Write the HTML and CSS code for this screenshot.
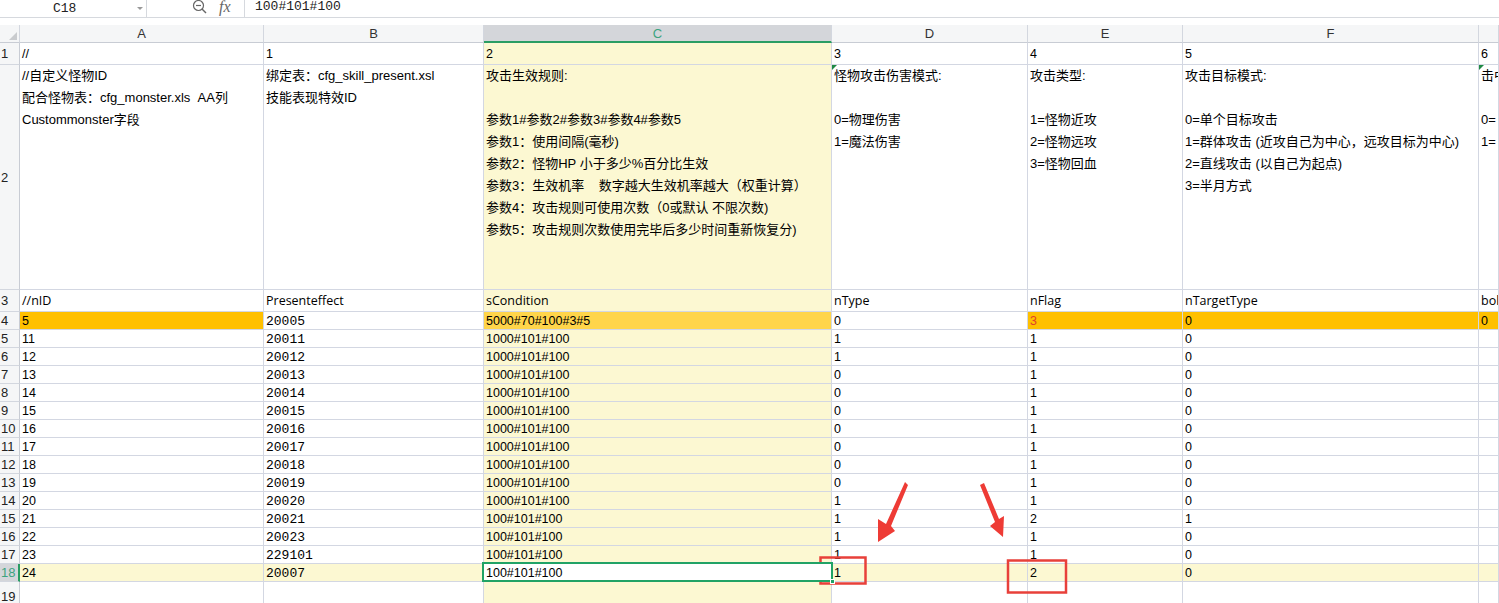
FILE: index.html
```html
<!DOCTYPE html>
<html lang="zh">
<head>
<meta charset="utf-8">
<title>cfg sheet</title>
<link rel="stylesheet" href="styles.css">
</head>
<body>
<div class="formula-bar">
  <div class="name-box"><span class="ref">C18</span><span class="caret"></span></div>
  <div class="tools">
    <svg class="zoom-ico" width="16" height="16" viewBox="0 0 16 16"><circle cx="6.5" cy="6.5" r="5" fill="none" stroke="#666" stroke-width="1.2"/><line x1="4" y1="6.5" x2="9" y2="6.5" stroke="#666" stroke-width="1.2"/><line x1="10" y1="10" x2="14" y2="14" stroke="#666" stroke-width="1.4"/></svg>
    <span class="fx">fx</span>
  </div>
  <div class="formula-input">100#101#100</div>
</div>
<div class="spacer"></div>
<div class="sheet">
  <!-- header -->
  <div class="ch corner"><span class="corner-tri"></span></div>
  <div class="ch">A</div><div class="ch">B</div><div class="ch active">C</div><div class="ch">D</div><div class="ch">E</div><div class="ch">F</div><div class="ch"></div>

  <!-- row 1 -->
  <div class="rh">1</div>
  <div class="c">//</div><div class="c">1</div><div class="c y">2</div><div class="c">3</div><div class="c">4</div><div class="c">5</div><div class="c">6</div>

  <!-- row 2 -->
  <div class="rh">2</div>
  <div class="c multi">//自定义怪物ID<br>配合怪物表：cfg_monster.xls&nbsp;&nbsp;AA列<br>Custommonster字段</div>
  <div class="c multi">绑定表：cfg_skill_present.xsl<br>技能表现特效ID</div>
  <div class="c multi y">攻击生效规则:<br><br>参数1#参数2#参数3#参数4#参数5<br>参数1：使用间隔(毫秒)<br>参数2：怪物HP 小于多少%百分比生效<br>参数3：生效机率&nbsp;&nbsp;&nbsp;&nbsp;数字越大生效机率越大（权重计算）<br>参数4：攻击规则可使用次数（0或默认 不限次数)<br>参数5：攻击规则次数使用完毕后多少时间重新恢复分)</div>
  <div class="c multi tri">怪物攻击伤害模式:<br><br>0=物理伤害<br>1=魔法伤害</div>
  <div class="c multi">攻击类型:<br><br>1=怪物近攻<br>2=怪物远攻<br>3=怪物回血</div>
  <div class="c multi">攻击目标模式:<br><br>0=单个目标攻击<br>1=群体攻击 (近攻自己为中心，远攻目标为中心)<br>2=直线攻击 (以自己为起点)<br>3=半月方式</div>
  <div class="c multi tri">击中目标效果:<br><br>0=&nbsp;不击退<br>1=&nbsp;击退</div>

  <!-- row 3 -->
  <div class="rh">3</div>
  <div class="c hd">//nID</div><div class="c hd">Presenteffect</div><div class="c hd y">sCondition</div><div class="c hd">nType</div><div class="c hd">nFlag</div><div class="c hd">nTargetType</div><div class="c hd">bolHit</div>

  <!-- row 4 -->
  <div class="rh">4</div>
  <div class="c or">5</div><div class="c num">20005</div><div class="c or-y">5000#70#100#3#5</div><div class="c">0</div><div class="c or red">3</div><div class="c or">0</div><div class="c or">0</div>

  <div class="rh">5</div>
  <div class="c">11</div><div class="c num">20011</div><div class="c y">1000#101#100</div><div class="c">1</div><div class="c">1</div><div class="c">0</div><div class="c"></div>
  <div class="rh">6</div>
  <div class="c">12</div><div class="c num">20012</div><div class="c y">1000#101#100</div><div class="c">1</div><div class="c">1</div><div class="c">0</div><div class="c"></div>
  <div class="rh">7</div>
  <div class="c">13</div><div class="c num">20013</div><div class="c y">1000#101#100</div><div class="c">0</div><div class="c">1</div><div class="c">0</div><div class="c"></div>
  <div class="rh">8</div>
  <div class="c">14</div><div class="c num">20014</div><div class="c y">1000#101#100</div><div class="c">0</div><div class="c">1</div><div class="c">0</div><div class="c"></div>
  <div class="rh">9</div>
  <div class="c">15</div><div class="c num">20015</div><div class="c y">1000#101#100</div><div class="c">0</div><div class="c">1</div><div class="c">0</div><div class="c"></div>
  <div class="rh">10</div>
  <div class="c">16</div><div class="c num">20016</div><div class="c y">1000#101#100</div><div class="c">0</div><div class="c">1</div><div class="c">0</div><div class="c"></div>
  <div class="rh">11</div>
  <div class="c">17</div><div class="c num">20017</div><div class="c y">1000#101#100</div><div class="c">0</div><div class="c">1</div><div class="c">0</div><div class="c"></div>
  <div class="rh">12</div>
  <div class="c">18</div><div class="c num">20018</div><div class="c y">1000#101#100</div><div class="c">0</div><div class="c">1</div><div class="c">0</div><div class="c"></div>
  <div class="rh">13</div>
  <div class="c">19</div><div class="c num">20019</div><div class="c y">1000#101#100</div><div class="c">0</div><div class="c">1</div><div class="c">0</div><div class="c"></div>
  <div class="rh">14</div>
  <div class="c">20</div><div class="c num">20020</div><div class="c y">1000#101#100</div><div class="c">1</div><div class="c">1</div><div class="c">0</div><div class="c"></div>
  <div class="rh">15</div>
  <div class="c">21</div><div class="c num">20021</div><div class="c y">100#101#100</div><div class="c">1</div><div class="c">2</div><div class="c">1</div><div class="c"></div>
  <div class="rh">16</div>
  <div class="c">22</div><div class="c num">20023</div><div class="c y">100#101#100</div><div class="c">1</div><div class="c">1</div><div class="c">0</div><div class="c"></div>
  <div class="rh">17</div>
  <div class="c">23</div><div class="c num">229101</div><div class="c y">100#101#100</div><div class="c">1</div><div class="c">1</div><div class="c">0</div><div class="c"></div>
  <div class="rh active-r">18</div>
  <div class="c hl">24</div><div class="c num hl">20007</div><div class="c sel">100#101#100<span class="sel-box"><span class="handle"></span></span></div><div class="c hl">1</div><div class="c hl">2</div><div class="c hl">0</div><div class="c hl"></div>
  <div class="rh">19</div>
  <div class="c"></div><div class="c"></div><div class="c y"></div><div class="c"></div><div class="c"></div><div class="c"></div><div class="c"></div>
</div>

<svg class="annot" width="1499" height="603" viewBox="0 0 1499 603">
  <rect x="820.5" y="557.5" width="45" height="26" fill="none" stroke="#e8403a" stroke-width="2.5"/>
  <rect x="1008" y="560.5" width="58" height="32" fill="none" stroke="#e8403a" stroke-width="2.5"/>
  <polygon points="905,482 908,485 891,526 895,531 878,542 878,519 886,524" fill="#ee3b35"/>
  <polygon points="980,485 984,483 999,519 1004,516 1003,537 990,526 995,522" fill="#ee3b35"/>
</svg>
</body>
</html>
```

FILE: styles.css
```css
* { box-sizing: border-box; }

html, body {
  margin: 0;
  padding: 0;
}

body {
  width: 1499px;
  height: 603px;
  overflow: hidden;
  position: relative;
  background: #ffffff;
  color: #000;
  font-family: "Liberation Sans", "Noto Sans CJK SC", sans-serif;
  font-size: 12.5px;
}

/* formula bar */
.formula-bar {
  display: flex;
  height: 18px;
  border-bottom: 1px solid #d6d9de;
  background: #fff;
}

.name-box {
  width: 147px;
  border-right: 1px solid #d6d9de;
  display: flex;
  align-items: center;
}

.ref {
  margin-left: 53px;
  font-family: "Liberation Mono", monospace;
  font-size: 13px;
  color: #222;
  line-height: 14px;
}

.caret {
  margin-left: auto;
  margin-right: 3px;
  width: 0;
  height: 0;
  border-left: 3px solid transparent;
  border-right: 3px solid transparent;
  border-top: 3px solid #999;
}

.tools {
  width: 97px;
  display: flex;
  align-items: center;
  padding-left: 45px;
  gap: 11px;
}

.zoom-ico { display: block; margin-top: -3px; }

.fx {
  font-family: "Liberation Serif", serif;
  font-style: italic;
  font-size: 16px;
  color: #666;
  line-height: 14px;
  margin-top: -3px;
}

.formula-input {
  flex: 1;
  border-left: 1px solid #d6d9de;
  padding-left: 10px;
  font-family: "Liberation Mono", monospace;
  font-size: 13px;
  line-height: 14px;
  color: #222;
}

.spacer {
  height: 7px;
  background: #ffffff;
}

/* sheet */
.sheet {
  display: grid;
  grid-template-columns: 20px 244px 220px 348px 196px 155px 296px 20px;
  grid-template-rows: 18px 22px 225px 22px repeat(15, 18px) 30px;
}

.ch {
  background: #f5f6f7;
  border-right: 1px solid #d3d7df;
  border-bottom: 1px solid #c8ccd4;
  display: flex;
  align-items: center;
  justify-content: center;
  font-size: 13px;
  color: #333;
}

.ch.active {
  background: #d4d6da;
  color: #3ca37f;
  border-bottom: 2px solid #2a9d64;
}

.corner { position: relative; }

.corner-tri {
  position: absolute;
  right: 2px;
  bottom: 2px;
  width: 0;
  height: 0;
  border-left: 8px solid transparent;
  border-bottom: 8px solid #c9cbce;
}

.rh {
  background: #f5f6f7;
  border-right: 1px solid #c8ccd4;
  border-bottom: 1px solid #d3d7df;
  display: flex;
  align-items: center;
  padding-left: 1px;
  font-size: 13px;
  color: #222;
}

.rh.active-r {
  background: #d4d6da;
  color: #3ca37f;
  border-right: 2px solid #2a9d64;
}

.c {
  border-right: 1px solid #d3d7e2;
  border-bottom: 1px solid #d3d7e2;
  padding-left: 2px;
  display: flex;
  align-items: center;
  white-space: nowrap;
  overflow: hidden;
  position: relative;
  font-size: 12.5px;
}

.c.multi {
  display: block;
  line-height: 22px;
  font-size: 13px;
}

.c.hd {
  font-family: "Open Sans", "Noto Sans CJK SC", sans-serif;
  font-size: 12.5px;
}

.c.num {
  font-family: "Liberation Mono", monospace;
  font-size: 13px;
  align-items: flex-end;
  padding-bottom: 0;
}

.y { background: #fcf8d2; }

.or { background: #ffc000; }
.or-y { background: #ffd54a; }
.red { color: #e0402a; }

.hl { background: #fcf8d2; }

.c.sel {
  background: #ffffff;
  overflow: visible;
  z-index: 2;
}

.sel-box {
  position: absolute;
  left: -2px;
  top: -2px;
  right: -2px;
  bottom: -1px;
  border: 2px solid #21a366;
}

.handle {
  position: absolute;
  right: -4px;
  bottom: -4px;
  width: 5px;
  height: 5px;
  background: #21a366;
  border: 1px solid #fff;
}

.tri::before {
  content: "";
  position: absolute;
  left: 0;
  top: 0;
  width: 0;
  height: 0;
  border-top: 5px solid #1f8a45;
  border-right: 5px solid transparent;
}

.annot {
  position: absolute;
  left: 0;
  top: 0;
  pointer-events: none;
}
```
